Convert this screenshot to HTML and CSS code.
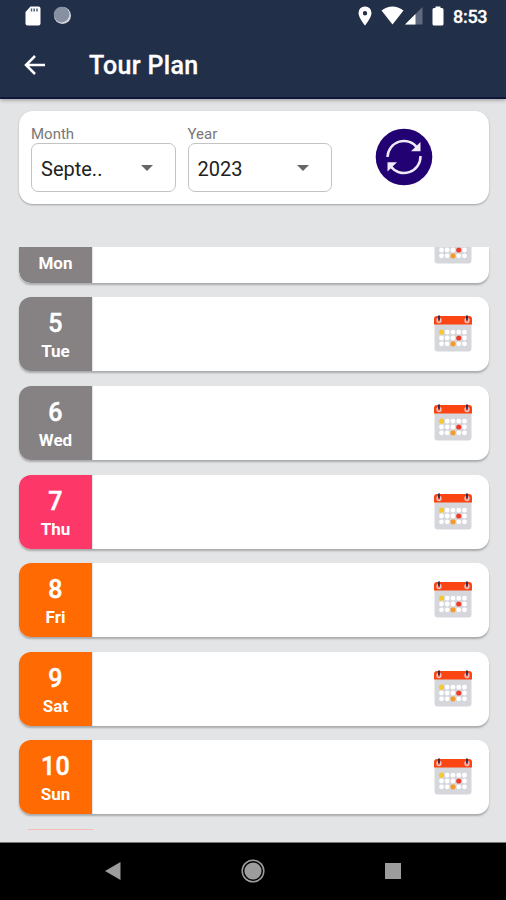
FILE: index.html
```html
<!DOCTYPE html>
<html lang="en">
<head>
<meta charset="utf-8">
<title>Tour Plan</title>
<link rel="stylesheet" href="styles.css">
</head>
<body>
<svg class="defs" aria-hidden="true">
  <symbol id="calendar" viewBox="0 0 38 37">
    <path fill="#d5d7dc" d="M.5 8h37v25.500a3 3 0 0 1-3 3h-31a3 3 0 0 1-3-3z"/>
    <path fill="#fb4613" d="M3 1h32q3 0 3 3v5.500H0V4q0-3 3-3z"/>
    <g fill="none" stroke="#e8c3c8" stroke-width="1.500"><circle cx="5" cy="5.500" r="1.900"/><circle cx="33" cy="5.500" r="1.900"/></g>
    <path stroke="#3d2d4d" stroke-width="2" stroke-linecap="round" d="M5 1.200v3M33 1.200v3"/>
    <g fill="none" stroke="#fff" stroke-width="4.800" stroke-linecap="round" stroke-dasharray="0 5.750">
      <path d="M7.500 17.200h23.100M7.500 23h23.100M7.500 28.800h23.100"/>
    </g>
    <circle cx="7.500" cy="17.200" r="2.600" fill="#f8c630"/>
    <circle cx="24.750" cy="23" r="2.600" fill="#ea3e2c"/>
    <circle cx="19" cy="28.800" r="2.600" fill="#f49a28"/>
  </symbol>
</svg>
<div class="screen">
  <header class="top">
    <div class="status">
      <svg width="16" height="20" viewBox="0 0 16 20"><path fill="#fff" d="M5.500.5h8q2 0 2 2v15q0 2-2 2h-11q-2 0-2-2V6z"/><path stroke="#56617a" stroke-width="1.500" d="M6.500 2.500v3M9.200 2.500v3M12 2.500v3"/></svg>
      <svg class="sync" width="19" height="19" viewBox="0 0 19 19"><circle cx="9.500" cy="9.500" r="8.500" fill="#d5d9e0"/><circle cx="8.600" cy="8.600" r="7.800" fill="#8690a1"/></svg>
      <span class="spacer"></span>
      <svg class="pin" width="14" height="20" viewBox="0 0 14 20"><path fill="#fff" fill-rule="evenodd" d="M7 .5A6.300 6.300 0 0 0 .5 7C.5 11.600 7 19.500 7 19.500S13.500 11.600 13.500 7A6.300 6.300 0 0 0 7 .5zM7 5a2.200 2.200 0 1 1 0 4.400A2.200 2.200 0 0 1 7 5z"/></svg>
      <svg class="wifi" width="23" height="19" viewBox="0 0 23 19"><path fill="#fff" d="M.5 4.500Q11.500-3.300 22.500 4.500L11.500 18.500z"/></svg>
      <svg class="signal" width="18" height="18" viewBox="0 0 18 18"><path fill="#5f6a80" d="M17.500 0v17.500H0z"/><path fill="#fff" d="M10.500 7v10.500H0z"/></svg>
      <svg class="battery" width="12" height="20" viewBox="0 0 12 20"><path fill="#fff" d="M3.500.5h5V2H10q1.500 0 1.500 1.500V18q0 1.500-1.500 1.500H2Q.5 19.500.5 18V3.500Q.5 2 2 2h1.500z"/></svg>
      <span class="time">8:53</span>
    </div>
    <div class="bar">
      <svg width="22" height="20" viewBox="0 0 22 20"><path fill="none" stroke="#fff" stroke-width="2.500" d="M21 10H2.500M11 1L2 10l9 9"/></svg>
      <h1>Tour Plan</h1>
    </div>
  </header>
  <main>
    <section class="filters">
      <div class="field"><label>Month</label><div class="select"><span>Septe..</span><i></i></div></div>
      <div class="field"><label>Year</label><div class="select"><span>2023</span><i></i></div></div>
      <svg class="refresh" width="58" height="58" viewBox="0 0 58 58">
        <circle cx="29" cy="29" r="28.300" fill="#220173"/>
        <path fill="none" stroke="#eeeaf6" stroke-width="2.500" d="M12.500 29A16.500 16.500 0 0 1 42.500 20M45.500 28A16.500 16.500 0 0 1 15.500 38"/>
        <path fill="#eeeaf6" d="M45.500 14v9.300H36zM12.500 43.500V34.200H22z"/>
      </svg>
    </section>
    <section class="days">
      <article class="day past cut"><div class="date"><span>Mon</span></div><div class="plan"><svg><use href="#calendar"/></svg></div></article>
      <article class="day past"><div class="date"><b>5</b><span>Tue</span></div><div class="plan"><svg><use href="#calendar"/></svg></div></article>
      <article class="day past"><div class="date"><b>6</b><span>Wed</span></div><div class="plan"><svg><use href="#calendar"/></svg></div></article>
      <article class="day today"><div class="date"><b>7</b><span>Thu</span></div><div class="plan"><svg><use href="#calendar"/></svg></div></article>
      <article class="day"><div class="date"><b>8</b><span>Fri</span></div><div class="plan"><svg><use href="#calendar"/></svg></div></article>
      <article class="day"><div class="date"><b>9</b><span>Sat</span></div><div class="plan"><svg><use href="#calendar"/></svg></div></article>
      <article class="day"><div class="date"><b>10</b><span>Sun</span></div><div class="plan"><svg><use href="#calendar"/></svg></div></article>
      <div class="next"></div>
    </section>
  </main>
  <nav>
    <svg width="16" height="18" viewBox="0 0 16 18"><path fill="#9c9c9c" d="M15.500 0v18L0 9z"/></svg>
    <svg width="24" height="24" viewBox="0 0 24 24"><circle cx="12" cy="12" r="10.800" fill="none" stroke="#9c9c9c" stroke-width="1.500"/><circle cx="12" cy="12" r="8.600" fill="#9c9c9c"/></svg>
    <svg width="16" height="16" viewBox="0 0 16 16"><path fill="#9c9c9c" d="M0 0h16v16H0z"/></svg>
  </nav>
</div>
</body>
</html>
```
FILE: styles.css
```css
* { box-sizing: border-box; }
body { margin: 0; font-family: Roboto, sans-serif; background: #e3e4e6; }
.defs { display: block; width: 0; height: 0; }
svg { display: block; flex: none; }
.screen { width: 506px; height: 900px; display: flex; flex-direction: column; overflow: hidden; }
.top { height: 99px; flex: none; background: #222f49; border-bottom: 2px solid #10183a; box-shadow: 0 1px 4px rgba(0,0,0,.35); color: #fff; }
.status { height: 31px; padding: 0 18px 0 25px; display: flex; align-items: center; }
.sync { margin-left: 12px; }
.spacer { flex: 1; }
.wifi { margin-left: 9px; }
.signal { margin-left: 1px; }
.battery { margin-left: 9px; }
.time { width: 35px; margin-left: 9px; font-size: 18px; font-weight: 500; letter-spacing: -.3px; line-height: 31px; margin-top: 1px; white-space: nowrap; -webkit-text-stroke: .3px #fff; }
.bar { height: 68px; display: flex; align-items: center; padding: 0 0 1px 24px; gap: 43px; }
h1 { margin: 2px 0 0; font-size: 25px; font-weight: 500; letter-spacing: .35px; line-height: 30px; -webkit-text-stroke: .3px #fff; }
main { flex: 1; min-height: 0; padding-top: 12px; }
.filters { width: 470px; height: 93px; margin-left: 19px; padding: 13px 12px 0; display: flex; gap: 12px; background: #fff; border-radius: 14px; box-shadow: 0 1px 2px rgba(0,0,0,.3); }
.field { width: 144.500px; }
label { display: block; height: 19px; font-size: 15px; line-height: 20px; color: #777; }
.select { height: 49px; border: 1.500px solid #c3c3c3; border-radius: 7px; display: flex; align-items: center; justify-content: space-between; padding: 2px 22px 0 9px; font-size: 20px; color: #222; }
.select i { border: 6px solid transparent; border-top-color: #666; border-bottom: 0; margin-top: -1px; }
.refresh { margin: 4px 0 0 31px; }
.days { height: 583px; margin-top: 43px; padding: 0 17px 0 19px; overflow: hidden; }
.day { height: 74px; margin-bottom: 14.600px; display: flex; background: #fff; border-radius: 12px; box-shadow: 0 2px 2px rgba(0,0,0,.25); }
.date { width: 73px; display: flex; flex-direction: column; align-items: center; padding-top: 12px; background: #ff6a03; color: #fff; border-radius: 12px 0 0 12px; box-shadow: 1px 0 1px rgba(0,0,0,.12); }
.date b { font-size: 25px; font-weight: 500; line-height: 30px; letter-spacing: .3px; -webkit-text-stroke: .5px #fff; }
.date span { font-size: 17px; font-weight: 700; line-height: 20px; margin-top: 2px; }
.past .date { background: #868283; }
.today .date { background: #fd3868; }
.plan { flex: 1; display: flex; justify-content: flex-end; align-items: center; padding: 0 17px 1px 0; }
.plan svg { width: 38px; height: 37px; }
.cut { height: 35.700px; align-items: flex-end; border-radius: 0 0 12px 12px; overflow: hidden; margin-bottom: 14.700px; }
.cut .date, .cut .plan { height: 74px; border-radius: 0 0 0 12px; }
.cut .date { justify-content: flex-end; padding-bottom: 10px; }
.next { width: 65px; height: 1px; margin: -.4px 0 0 9px; background: #f4bcb6; }
nav { height: 58px; flex: none; background: #000; border-top: 1px solid #777; display: flex; align-items: center; justify-content: space-between; padding: 0 105px 2px; }
```
